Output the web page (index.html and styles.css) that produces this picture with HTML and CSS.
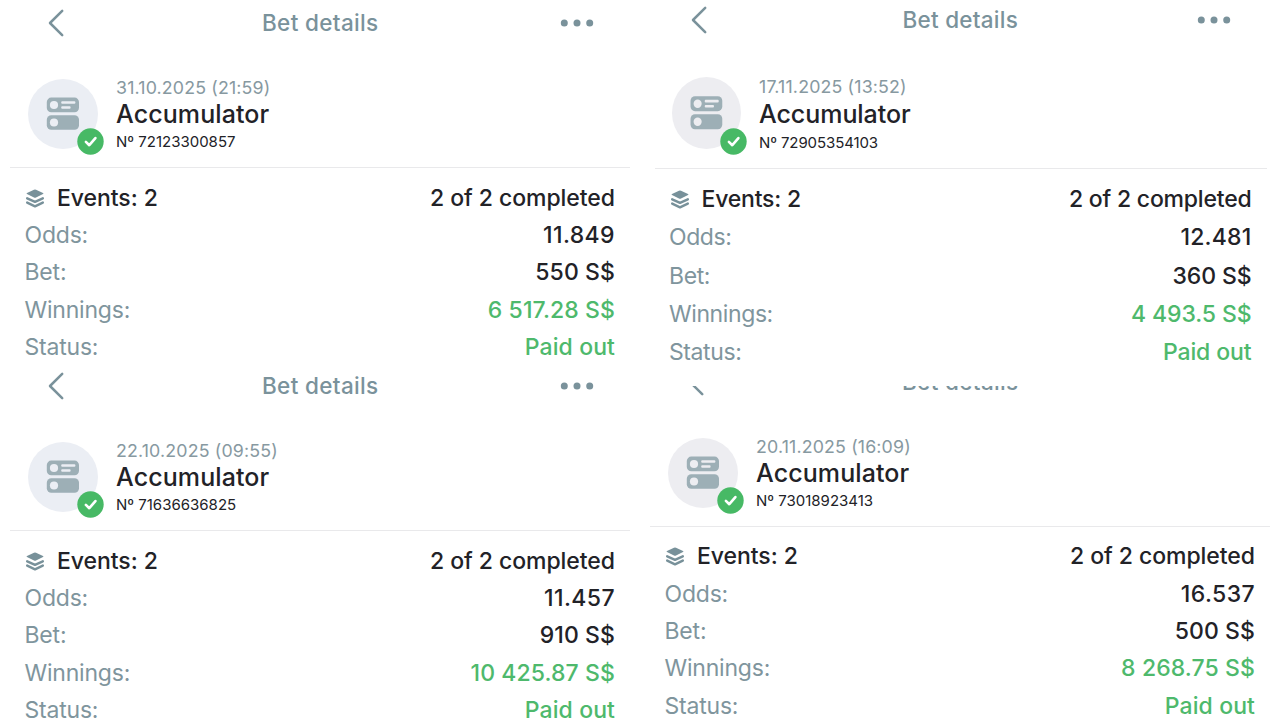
FILE: index.html
```
<!DOCTYPE html>
<html lang="en">
<head>
    <meta charset="UTF-8">
    <meta name="viewport" content="width=device-width, initial-scale=1.0">
    <title>Bet details</title>
    <link rel="stylesheet" href="styles.css">
</head>
<body>
    <!-- shared icons -->
    <svg class="sprite" width="0" height="0">
        <symbol id="back" viewBox="0 0 18 28">
            <path d="M15.2 1.8 3 14l12.2 12.2" fill="none" stroke="currentColor" stroke-width="2.5" stroke-linecap="round" stroke-linejoin="round"/>
        </symbol>
        <symbol id="more" viewBox="0 0 34 8">
            <circle cx="4.3" cy="4" r="3.5"/>
            <circle cx="17" cy="4" r="3.5"/>
            <circle cx="29.7" cy="4" r="3.5"/>
        </symbol>
        <symbol id="accumulator" viewBox="0 0 70 70" preserveAspectRatio="none">
            <circle class="disc" cx="35" cy="35" r="35"/>
            <rect class="slab" x="18.8" y="18.6" width="32.2" height="14.6" rx="4.5"/>
            <rect class="slab" x="18.8" y="36.2" width="32.2" height="14.6" rx="4.5"/>
            <circle class="disc" cx="26" cy="26" r="4.1"/>
            <circle class="disc" cx="26" cy="43.5" r="4.1"/>
            <rect class="disc" x="33.2" y="22.2" width="14.2" height="2.5" rx="1"/>
            <rect class="disc" x="33.2" y="27.2" width="9.4" height="2.5" rx="1"/>
        </symbol>
        <symbol id="check" viewBox="0 0 27 27">
            <circle cx="13.5" cy="13.5" r="13.2" fill="#47b965"/>
            <path d="M8.9 13.9l3.4 3.3 6.1-7.1" fill="none" stroke="#fff" stroke-width="2.6" stroke-linecap="round" stroke-linejoin="round"/>
        </symbol>
        <symbol id="layers" viewBox="0 0 18 19">
            <path d="M8 .7Q9 .3 10 .7L17 3.9Q18 4.5 17 5.1L10 8.5Q9 8.9 8 8.5L1 5.1Q0 4.5 1 3.9Z"/>
            <path d="M1.2 9.3 9 12.9l7.8-3.6M1.2 13.6 9 17.3l7.8-3.7" fill="none" stroke="currentColor" stroke-width="2.4" stroke-linecap="round" stroke-linejoin="round"/>
        </symbol>
    </svg>

    <div class="board">
        <div class="column">
            <section class="bet">
                <div class="topbar">
                    <svg class="back"><use href="#back"/></svg>
                    <h2>Bet details</h2>
                    <svg class="more"><use href="#more"/></svg>
                </div>
                <div class="head">
                    <div class="type">
                        <svg class="type-icon"><use href="#accumulator"/></svg>
                        <svg class="badge"><use href="#check"/></svg>
                    </div>
                    <div class="info">
                        <div class="date">31.10.2025 (21:59)</div>
                        <div class="name">Accumulator</div>
                        <div class="number">Nº 72123300857</div>
                    </div>
                </div>
                <div class="rows">
                    <div class="row events"><span><svg class="layers"><use href="#layers"/></svg>Events: 2</span><b>2 of 2 completed</b></div>
                    <div class="row"><span>Odds:</span><b class="odds">11.849</b></div>
                    <div class="row"><span>Bet:</span><b>550 S$</b></div>
                    <div class="row"><span>Winnings:</span><b class="win">6 517.28 S$</b></div>
                    <div class="row"><span>Status:</span><b class="win">Paid out</b></div>
                </div>
            </section>

            <section class="bet">
                <div class="topbar">
                    <svg class="back"><use href="#back"/></svg>
                    <h2>Bet details</h2>
                    <svg class="more"><use href="#more"/></svg>
                </div>
                <div class="head">
                    <div class="type">
                        <svg class="type-icon"><use href="#accumulator"/></svg>
                        <svg class="badge"><use href="#check"/></svg>
                    </div>
                    <div class="info">
                        <div class="date">22.10.2025 (09:55)</div>
                        <div class="name">Accumulator</div>
                        <div class="number">Nº 71636636825</div>
                    </div>
                </div>
                <div class="rows">
                    <div class="row events"><span><svg class="layers"><use href="#layers"/></svg>Events: 2</span><b>2 of 2 completed</b></div>
                    <div class="row"><span>Odds:</span><b class="odds">11.457</b></div>
                    <div class="row"><span>Bet:</span><b>910 S$</b></div>
                    <div class="row"><span>Winnings:</span><b class="win">10 425.87 S$</b></div>
                    <div class="row"><span>Status:</span><b class="win">Paid out</b></div>
                </div>
            </section>
        </div>

        <div class="column column-right">
            <section class="bet bet-tall">
                <div class="topbar">
                    <svg class="back"><use href="#back"/></svg>
                    <h2>Bet details</h2>
                    <svg class="more"><use href="#more"/></svg>
                </div>
                <div class="head">
                    <div class="type">
                        <svg class="type-icon"><use href="#accumulator"/></svg>
                        <svg class="badge"><use href="#check"/></svg>
                    </div>
                    <div class="info">
                        <div class="date">17.11.2025 (13:52)</div>
                        <div class="name">Accumulator</div>
                        <div class="number">Nº 72905354103</div>
                    </div>
                </div>
                <div class="rows">
                    <div class="row events"><span><svg class="layers"><use href="#layers"/></svg>Events: 2</span><b>2 of 2 completed</b></div>
                    <div class="row"><span>Odds:</span><b class="odds">12.481</b></div>
                    <div class="row"><span>Bet:</span><b>360 S$</b></div>
                    <div class="row"><span>Winnings:</span><b class="win">4 493.5 S$</b></div>
                    <div class="row"><span>Status:</span><b class="win">Paid out</b></div>
                </div>
            </section>

            <!-- scrolled a little, so its top bar is cut off -->
            <div class="scrolled">
                <section class="bet">
                    <div class="topbar">
                        <svg class="back"><use href="#back"/></svg>
                        <h2>Bet details</h2>
                        <svg class="more"><use href="#more"/></svg>
                    </div>
                    <div class="head">
                        <div class="type">
                            <svg class="type-icon"><use href="#accumulator"/></svg>
                            <svg class="badge"><use href="#check"/></svg>
                        </div>
                        <div class="info">
                            <div class="date">20.11.2025 (16:09)</div>
                            <div class="name">Accumulator</div>
                            <div class="number">Nº 73018923413</div>
                        </div>
                    </div>
                    <div class="rows">
                        <div class="row events"><span><svg class="layers"><use href="#layers"/></svg>Events: 2</span><b>2 of 2 completed</b></div>
                        <div class="row"><span>Odds:</span><b class="odds">16.537</b></div>
                        <div class="row"><span>Bet:</span><b>500 S$</b></div>
                        <div class="row"><span>Winnings:</span><b class="win">8 268.75 S$</b></div>
                        <div class="row"><span>Status:</span><b class="win">Paid out</b></div>
                    </div>
                </section>
            </div>
        </div>
    </div>
</body>
</html>
```
FILE: styles.css
```
* {
    box-sizing: border-box;
}

body {
    margin: 0;
    background-color: #fff;
    font-family: Inter, "Liberation Sans", sans-serif;
    color: #222227;
}

.sprite {
    position: absolute;
}

svg {
    display: block;
    fill: currentColor;
}

.board {
    display: grid;
    grid-template-columns: 640px 640px;
    height: 720px;
    overflow: hidden;
}

.column {
    --disc: #ebeef4;
    height: 720px;
    overflow: hidden;
}

.column-right {
    --disc: #ededf1;
}

.bet {
    width: 620px;
    height: 363px;
    margin: 0 10px;
}

.topbar {
    display: flex;
    align-items: center;
    justify-content: space-between;
    height: 46px;
    padding: 0 36px 0 36.5px;
    color: #7a929b;
}

.topbar h2 {
    margin: 0;
    padding-left: 16px;
    font-size: 22.5px;
    line-height: 46px;
    font-weight: 450;
    letter-spacing: 0.35px;
}

.back {
    width: 18px;
    height: 28px;
}

.more {
    width: 34px;
    height: 8px;
}

.head {
    display: flex;
    gap: 18px;
    height: 122px;
    padding: 30px 0 0 18px;
    border-bottom: 1.5px solid #e9e9eb;
}

.type {
    position: relative;
    width: 70px;
    height: 70px;
    margin-top: 3px;
}

.type-icon {
    width: 100%;
    height: 100%;
}

.disc {
    fill: var(--disc);
}

.slab {
    fill: #9dafb6;
}

.badge {
    position: absolute;
    right: -6px;
    bottom: -6px;
    width: 27px;
    height: 27px;
}

.date {
    font-size: 17.8px;
    line-height: 24px;
    letter-spacing: 0.15px;
    color: #8799a1;
}

.name {
    font-size: 25px;
    line-height: 29px;
    font-weight: 500;
    letter-spacing: 0.1px;
}

.number {
    font-size: 15px;
    line-height: 26px;
}

.rows {
    padding: 11.5px 15px 0 14.5px;
}

.row {
    display: flex;
    align-items: center;
    justify-content: space-between;
    height: 37.3px;
    font-size: 23px;
    line-height: 37px;
    color: #7f959d;
}

.row span {
    display: flex;
    align-items: center;
    letter-spacing: -0.2px;
}

.row b {
    color: #222227;
    font-weight: 500;
    letter-spacing: 0.1px;
}

.row .odds {
    letter-spacing: 0.4px;
}

.row .win {
    color: #4eb96c;
}

.row.events span {
    color: #222227;
    font-weight: 500;
    letter-spacing: -0.05px;
}

.row.events b {
    letter-spacing: -0.05px;
}

.layers {
    width: 18px;
    height: 19px;
    margin: 0 13px 0 1.5px;
    color: #78919a;
}

/* slightly narrower and taller card */
.bet-tall {
    width: 612px;
    height: 386px;
    margin-left: 14.5px;
}

.bet-tall .topbar {
    height: 40px;
    padding: 0 35.5px 0 35px;
}

.bet-tall .topbar h2 {
    padding-left: 16px;
    line-height: 40px;
    letter-spacing: 0.25px;
}

.bet-tall .head {
    gap: 18px;
    height: 129px;
    padding: 34.5px 0 0 17.5px;
}

.bet-tall .type {
    width: 69px;
    height: 72px;
    margin-top: 2.5px;
}

.bet-tall .badge {
    bottom: -6px;
}

.bet-tall .name {
    line-height: 30px;
    letter-spacing: -0.05px;
}

.bet-tall .number {
    line-height: 28px;
    letter-spacing: -0.1px;
}

.bet-tall .rows {
    padding-top: 11.5px;
}

.bet-tall .row {
    height: 38.3px;
}

.bet-tall .row span {
    letter-spacing: -0.4px;
}

.bet-tall .row b {
    letter-spacing: -0.1px;
}

.bet-tall .row.events span,
.bet-tall .row.events b {
    letter-spacing: -0.2px;
}

.bet-tall .row .odds {
    letter-spacing: 0.2px;
}

.scrolled {
    height: 334px;
    overflow: hidden;
}

.scrolled .bet {
    margin-top: -27.3px;
}
```
